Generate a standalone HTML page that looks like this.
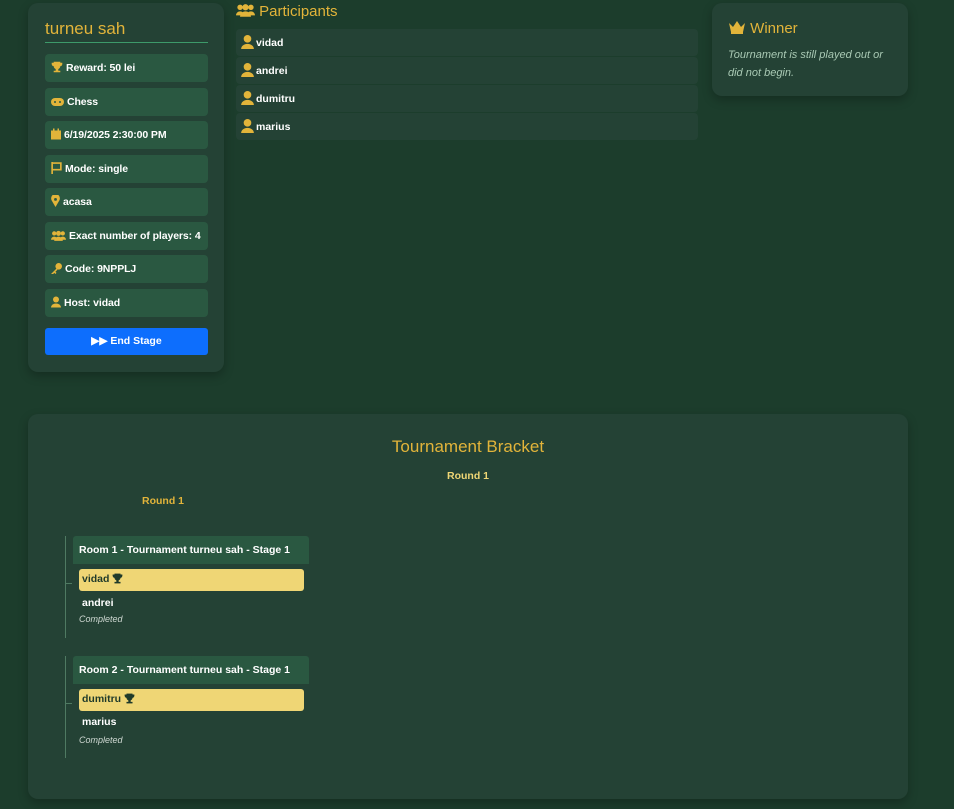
<!DOCTYPE html>
<html><head><meta charset="utf-8"><style>
*{box-sizing:border-box;margin:0;padding:0}
body{width:954px;height:809px;background:#1c3d2c;font-family:"Liberation Sans",sans-serif;position:relative;overflow:hidden;color:#fff}
.card{position:absolute;background:#244235;border-radius:10px;box-shadow:0 4px 10px rgba(0,0,0,.25)}
.gold{color:#e2b43a}
.item{position:absolute;left:17px;width:163px;height:28px;background:#2a5841;border-radius:4px;font-size:10.5px;font-weight:bold;line-height:28px;padding-left:6px;color:#fff;white-space:nowrap;letter-spacing:-0.1px}
.item svg{vertical-align:-2px;margin-right:3px}
.p{position:absolute;left:236px;width:462px;height:27px;background:#244235;border-radius:4px;font-size:10.5px;font-weight:bold;line-height:29px;padding-left:5px}
.p svg{vertical-align:-3px;margin-right:2px}
.room{position:absolute;left:73px;width:236px;height:28px;background:#2a5841;border-radius:3px 3px 0 0;font-size:10.5px;font-weight:bold;line-height:28px;padding-left:6px;white-space:nowrap}
.win{position:absolute;left:79px;width:225px;height:22px;background:#efd675;border-radius:3px;color:#1f3a2a;font-size:10.5px;font-weight:bold;line-height:20px;padding-left:3px}
.win svg{vertical-align:-2px}
.lose{position:absolute;left:82px;font-size:10.5px;font-weight:bold}
.comp{position:absolute;left:79px;font-size:9px;font-style:italic;color:#cfd8d2}
.vl{position:absolute;left:65px;width:1px;background:#4f7a62}
</style></head><body>
<div class="card" style="left:28px;top:3px;width:196px;height:369px">
<div class="gold" style="position:absolute;left:17px;top:16px;font-size:17px">turneu sah</div>
<div style="position:absolute;left:17px;top:39px;width:163px;height:1px;background:#3d9a6a"></div>
<div class="item" style="top:51px"><svg width="12" height="12" viewBox="0 0 12 12"><path d="M3 1h6v4a3 3 0 0 1-6 0zM3 2H1v1a2 2 0 0 0 2 2M9 2h2v1a2 2 0 0 1-2 2M5 8h2v2h2v1H3v-1h2z" fill="#e2b43a" stroke="#e2b43a" stroke-width=".6"/></svg>Reward: 50 lei</div>
<div class="item" style="top:85px"><svg width="13" height="10" viewBox="0 0 13 10"><rect x="0" y="1" width="13" height="8" rx="4" fill="#e2b43a"/><circle cx="4" cy="5" r="1" fill="#2a5841"/><circle cx="9" cy="5" r="1" fill="#2a5841"/></svg>Chess</div>
<div class="item" style="top:118px"><svg width="10" height="12" viewBox="0 0 10 11"><rect x="0" y="2" width="10" height="9" fill="#e2b43a"/><rect x="2" y="0" width="1.5" height="3" fill="#e2b43a"/><rect x="6.5" y="0" width="1.5" height="3" fill="#e2b43a"/></svg>6/19/2025 2:30:00 PM</div>
<div class="item" style="top:152px"><svg width="11" height="12" viewBox="0 0 10 11"><path d="M1 0v11M1 1h8v6H1" stroke="#e2b43a" stroke-width="1.5" fill="none"/></svg>Mode: single</div>
<div class="item" style="top:185px"><svg width="9" height="12" viewBox="0 0 8 11"><path d="M4 11L0.5 5A4 4 0 1 1 7.5 5z" fill="#e2b43a"/><circle cx="4" cy="4" r="1.3" fill="#2a5841"/></svg>acasa</div>
<div class="item" style="top:219px"><svg width="15" height="11" viewBox="0 0 14 10"><circle cx="3" cy="3" r="2" fill="#e2b43a"/><circle cx="11" cy="3" r="2" fill="#e2b43a"/><circle cx="7" cy="3" r="2.3" fill="#e2b43a"/><path d="M0 9a3 3 0 0 1 6 0zM8 9a3 3 0 0 1 6 0zM3 10a4 4 0 0 1 8 0z" fill="#e2b43a"/></svg>Exact number of players: 4</div>
<div class="item" style="top:252px"><svg width="11" height="11" viewBox="0 0 10 10"><circle cx="7" cy="3" r="3" fill="#e2b43a"/><path d="M5 5L0 10h2l1-1 1 1 1-1-1-1 2-2" fill="#e2b43a"/></svg>Code: 9NPPLJ</div>
<div class="item" style="top:286px"><svg width="10" height="12" viewBox="0 0 10 11"><circle cx="5" cy="3" r="3" fill="#e2b43a"/><path d="M0 11a5 4 0 0 1 10 0z" fill="#e2b43a"/></svg>Host: vidad</div>
<div style="position:absolute;left:17px;top:325px;width:163px;height:27px;background:#0d6efd;border-radius:3px;font-size:10.5px;font-weight:bold;line-height:27px;text-align:center">▶▶ End Stage</div>
</div>
<div class="gold" style="position:absolute;left:236px;top:3px;font-size:15px"><svg width="19" height="14" viewBox="0 0 14 10" style="vertical-align:-1px"><circle cx="3" cy="3" r="2" fill="#e2b43a"/><circle cx="11" cy="3" r="2" fill="#e2b43a"/><circle cx="7" cy="3" r="2.3" fill="#e2b43a"/><path d="M0 9a3 3 0 0 1 6 0zM8 9a3 3 0 0 1 6 0zM3 10a4 4 0 0 1 8 0z" fill="#e2b43a"/></svg> Participants</div>
<div class="p" style="top:29px"><svg width="13" height="14" viewBox="0 0 10 11"><circle cx="5" cy="3" r="3" fill="#e2b43a"/><path d="M0 11a5 4 0 0 1 10 0z" fill="#e2b43a"/></svg>vidad</div>
<div class="p" style="top:57px"><svg width="13" height="14" viewBox="0 0 10 11"><circle cx="5" cy="3" r="3" fill="#e2b43a"/><path d="M0 11a5 4 0 0 1 10 0z" fill="#e2b43a"/></svg>andrei</div>
<div class="p" style="top:85px"><svg width="13" height="14" viewBox="0 0 10 11"><circle cx="5" cy="3" r="3" fill="#e2b43a"/><path d="M0 11a5 4 0 0 1 10 0z" fill="#e2b43a"/></svg>dumitru</div>
<div class="p" style="top:113px"><svg width="13" height="14" viewBox="0 0 10 11"><circle cx="5" cy="3" r="3" fill="#e2b43a"/><path d="M0 11a5 4 0 0 1 10 0z" fill="#e2b43a"/></svg>marius</div>
<div class="card" style="left:712px;top:3px;width:196px;height:93px">
<div class="gold" style="position:absolute;left:16px;top:17px;font-size:15px"><svg width="18" height="14" viewBox="0 0 18 14" style="vertical-align:-1px"><path d="M1 3l4 4 4-6 4 6 4-4-2 9H3z" fill="#e2b43a"/><rect x="3" y="12" width="12" height="2" fill="#e2b43a"/></svg> Winner</div>
<div style="position:absolute;left:16px;top:43px;width:170px;font-size:11px;font-style:italic;line-height:18px;color:#a9c9b4">Tournament is still played out or did not begin.</div>
</div>
<div class="card" style="left:28px;top:414px;width:880px;height:385px">
<div class="gold" style="position:absolute;left:0;width:880px;top:23px;text-align:center;font-size:17px">Tournament Bracket</div>
<div style="position:absolute;left:0;width:880px;top:56px;text-align:center;font-size:10.5px;font-weight:bold;color:#efd675">Round 1</div>
<div class="gold" style="position:absolute;left:114px;top:81px;font-size:10.5px;font-weight:bold">Round 1</div>
</div>
<div class="vl" style="top:536px;height:102px"></div>
<div style="position:absolute;left:65px;top:583px;width:7px;height:1px;background:#4f7a62"></div>
<div class="room" style="top:536px">Room 1 - Tournament turneu sah - Stage 1</div>
<div class="win" style="top:569px">vidad <svg width="11" height="11" viewBox="0 0 12 12"><path d="M3 1h6v4a3 3 0 0 1-6 0zM3 2H1v1a2 2 0 0 0 2 2M9 2h2v1a2 2 0 0 1-2 2M5 8h2v2h2v1H3v-1h2z" fill="#1f3a2a" stroke="#1f3a2a" stroke-width=".6"/></svg></div>
<div class="lose" style="top:597px">andrei</div>
<div class="comp" style="top:614px">Completed</div>
<div class="vl" style="top:656px;height:102px"></div>
<div style="position:absolute;left:65px;top:703px;width:7px;height:1px;background:#4f7a62"></div>
<div class="room" style="top:656px">Room 2 - Tournament turneu sah - Stage 1</div>
<div class="win" style="top:689px">dumitru <svg width="11" height="11" viewBox="0 0 12 12"><path d="M3 1h6v4a3 3 0 0 1-6 0zM3 2H1v1a2 2 0 0 0 2 2M9 2h2v1a2 2 0 0 1-2 2M5 8h2v2h2v1H3v-1h2z" fill="#1f3a2a" stroke="#1f3a2a" stroke-width=".6"/></svg></div>
<div class="lose" style="top:716px">marius</div>
<div class="comp" style="top:735px">Completed</div>
</body></html>
